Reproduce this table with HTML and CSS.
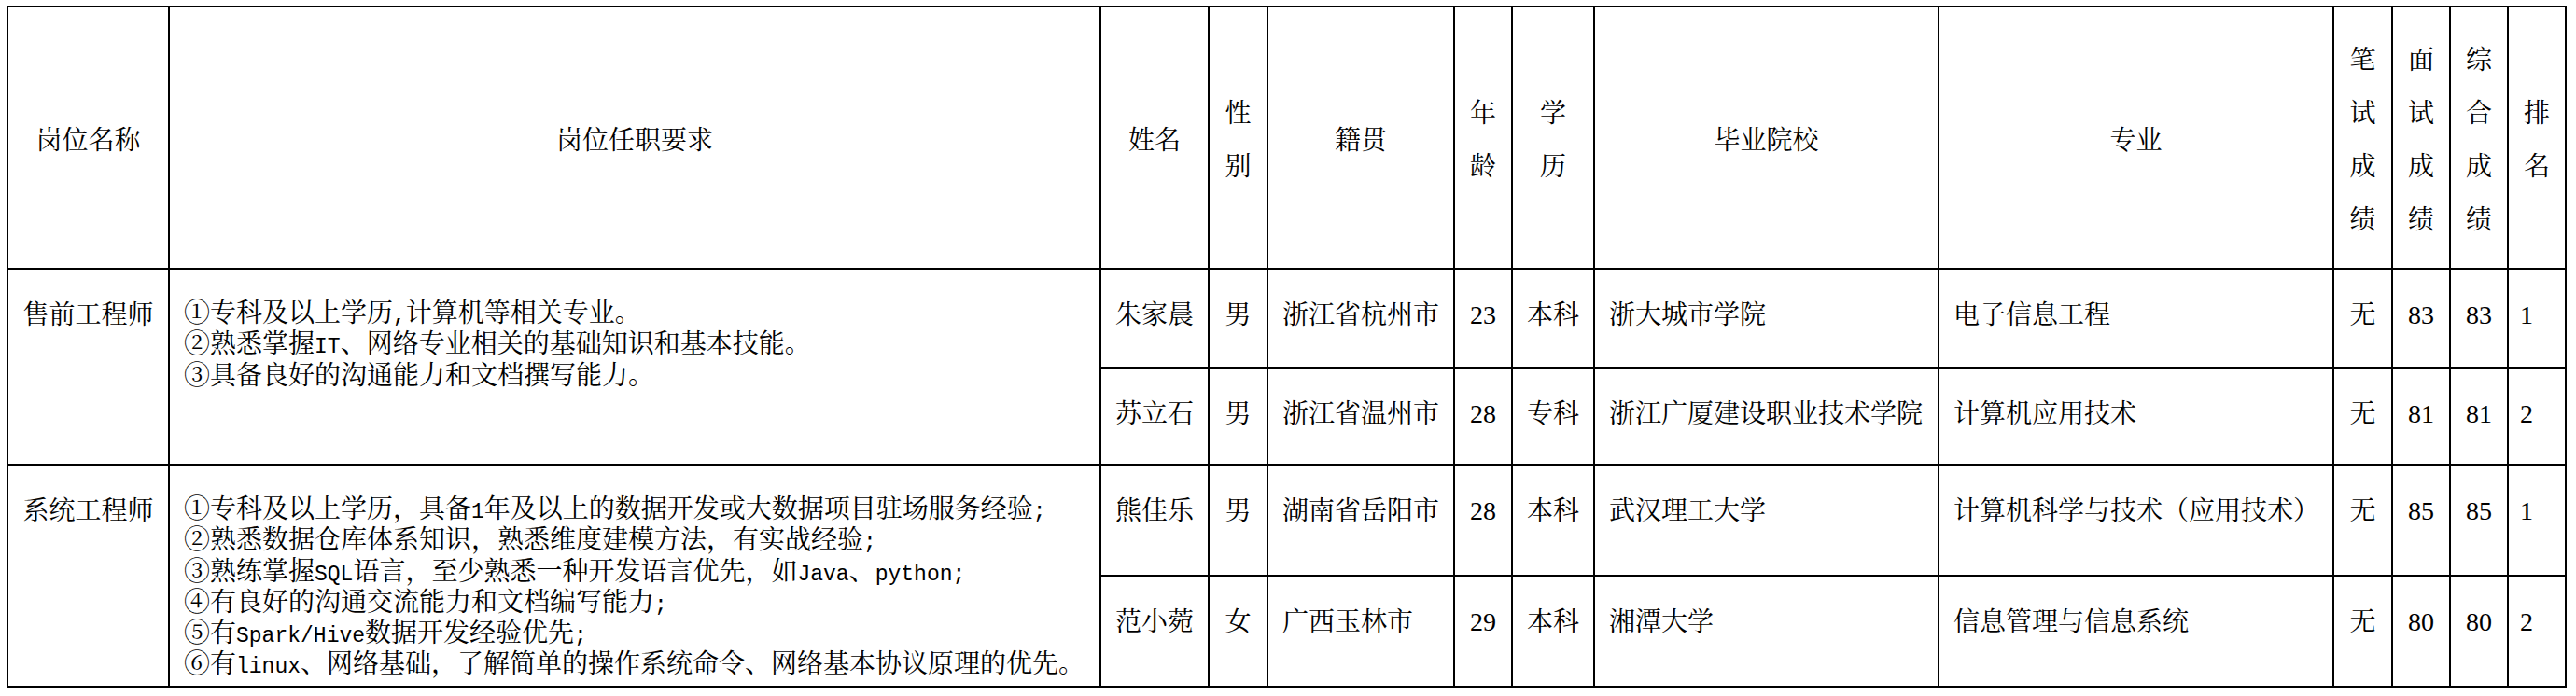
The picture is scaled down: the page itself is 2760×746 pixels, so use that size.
FILE: index.html
```html
<!DOCTYPE html>
<html lang="zh-CN">
<head>
<meta charset="utf-8">
<title>岗位人员名单</title>
<link rel="stylesheet" href="styles.css">
</head>
<body>
<table class="sheet">
  <colgroup>
    <col class="w-post"><col class="w-req"><col class="w-name"><col class="w-sex"><col class="w-origin"><col class="w-age"><col class="w-edu"><col class="w-school"><col class="w-major"><col class="w-score1"><col class="w-score"><col class="w-score"><col class="w-rank">
  </colgroup>
  <thead>
    <tr class="r-head">
      <th>岗位名称</th>
      <th>岗位任职要求</th>
      <th>姓名</th>
      <th>性<br>别</th>
      <th>籍贯</th>
      <th>年<br>龄</th>
      <th>学<br>历</th>
      <th>毕业院校</th>
      <th>专业</th>
      <th>笔<br>试<br>成<br>绩</th>
      <th>面<br>试<br>成<br>绩</th>
      <th>综<br>合<br>成<br>绩</th>
      <th>排<br>名</th>
    </tr>
  </thead>
  <tbody>
    <tr class="r-a">
      <td rowspan="2">售前工程师</td>
      <td rowspan="2" class="req">①专科及以上学历<span class="lat">,</span>计算机等相关专业。<br>②熟悉掌握<span class="lat">IT</span>、网络专业相关的基础知识和基本技能。<br>③具备良好的沟通能力和文档撰写能力。</td>
      <td>朱家晨</td><td>男</td><td class="left">浙江省杭州市</td><td>23</td><td>本科</td><td class="left">浙大城市学院</td><td class="left">电子信息工程</td><td>无</td><td>83</td><td>83</td><td class="rank">1</td>
    </tr>
    <tr class="r-b">
      <td>苏立石</td><td>男</td><td class="left">浙江省温州市</td><td>28</td><td>专科</td><td class="left">浙江广厦建设职业技术学院</td><td class="left">计算机应用技术</td><td>无</td><td>81</td><td>81</td><td class="rank">2</td>
    </tr>
    <tr class="r-c">
      <td rowspan="2">系统工程师</td>
      <td rowspan="2" class="req">①专科及以上学历，具备<span class="lat">1</span>年及以上的数据开发或大数据项目驻场服务经验<span class="lat">;</span><br>②熟悉数据仓库体系知识，熟悉维度建模方法，有实战经验<span class="lat">;</span><br>③熟练掌握<span class="lat">SQL</span>语言，至少熟悉一种开发语言优先，如<span class="lat">Java</span>、<span class="lat">python;</span><br>④有良好的沟通交流能力和文档编写能力<span class="lat">;</span><br>⑤有<span class="lat">Spark/Hive</span>数据开发经验优先<span class="lat">;</span><br>⑥有<span class="lat">linux</span>、网络基础，了解简单的操作系统命令、网络基本协议原理的优先。</td>
      <td>熊佳乐</td><td>男</td><td class="left">湖南省岳阳市</td><td>28</td><td>本科</td><td class="left">武汉理工大学</td><td class="left">计算机科学与技术（应用技术）</td><td>无</td><td>85</td><td>85</td><td class="rank">1</td>
    </tr>
    <tr class="r-d">
      <td>范小菀</td><td>女</td><td class="left">广西玉林市</td><td>29</td><td>本科</td><td class="left">湘潭大学</td><td class="left">信息管理与信息系统</td><td>无</td><td>80</td><td>80</td><td class="rank">2</td>
    </tr>
  </tbody>
</table>
</body>
</html>
```

FILE: styles.css
```css
* { box-sizing: border-box; }

html, body {
  margin: 0;
  background: #ffffff;
}

body {
  padding: 6px 0 0 7px;
}

.sheet {
  border-collapse: collapse;
  table-layout: fixed;
  width: 2743px;
  font-family: "Liberation Serif", "Noto Serif CJK SC", "Noto Sans CJK SC", serif;
  font-size: 28px;
  color: #000000;
}

.w-post { width: 173px; }
.w-req { width: 998px; }
.w-name { width: 116px; }
.w-sex { width: 63px; }
.w-origin { width: 200px; }
.w-age { width: 62px; }
.w-edu { width: 88px; }
.w-school { width: 369px; }
.w-major { width: 423px; }
.w-score1 { width: 63px; }
.w-score { width: 62px; }
.w-rank { width: 62px; }

.r-head { height: 281px; }
.r-a { height: 106px; }
.r-b { height: 104px; }
.r-c { height: 119px; }
.r-d { height: 119px; }

.sheet th,
.sheet td {
  border: 2px solid #000000;
  padding: 0;
}

.sheet th {
  font-weight: normal;
  line-height: 57px;
  vertical-align: middle;
  text-align: center;
  padding-top: 5px;
}

.sheet td {
  vertical-align: top;
  line-height: 33.3px;
  padding-top: 32px;
  text-align: center;
  white-space: nowrap;
}

.sheet td.req {
  text-align: left;
  padding-left: 15px;
  padding-top: 30px;
}

.sheet td.left {
  text-align: left;
  padding-left: 15px;
}

.sheet td.rank {
  text-align: left;
  padding-left: 12px;
}

.lat {
  font-family: "Liberation Mono", monospace;
  font-size: 23px;
  line-height: 0;
}
```
